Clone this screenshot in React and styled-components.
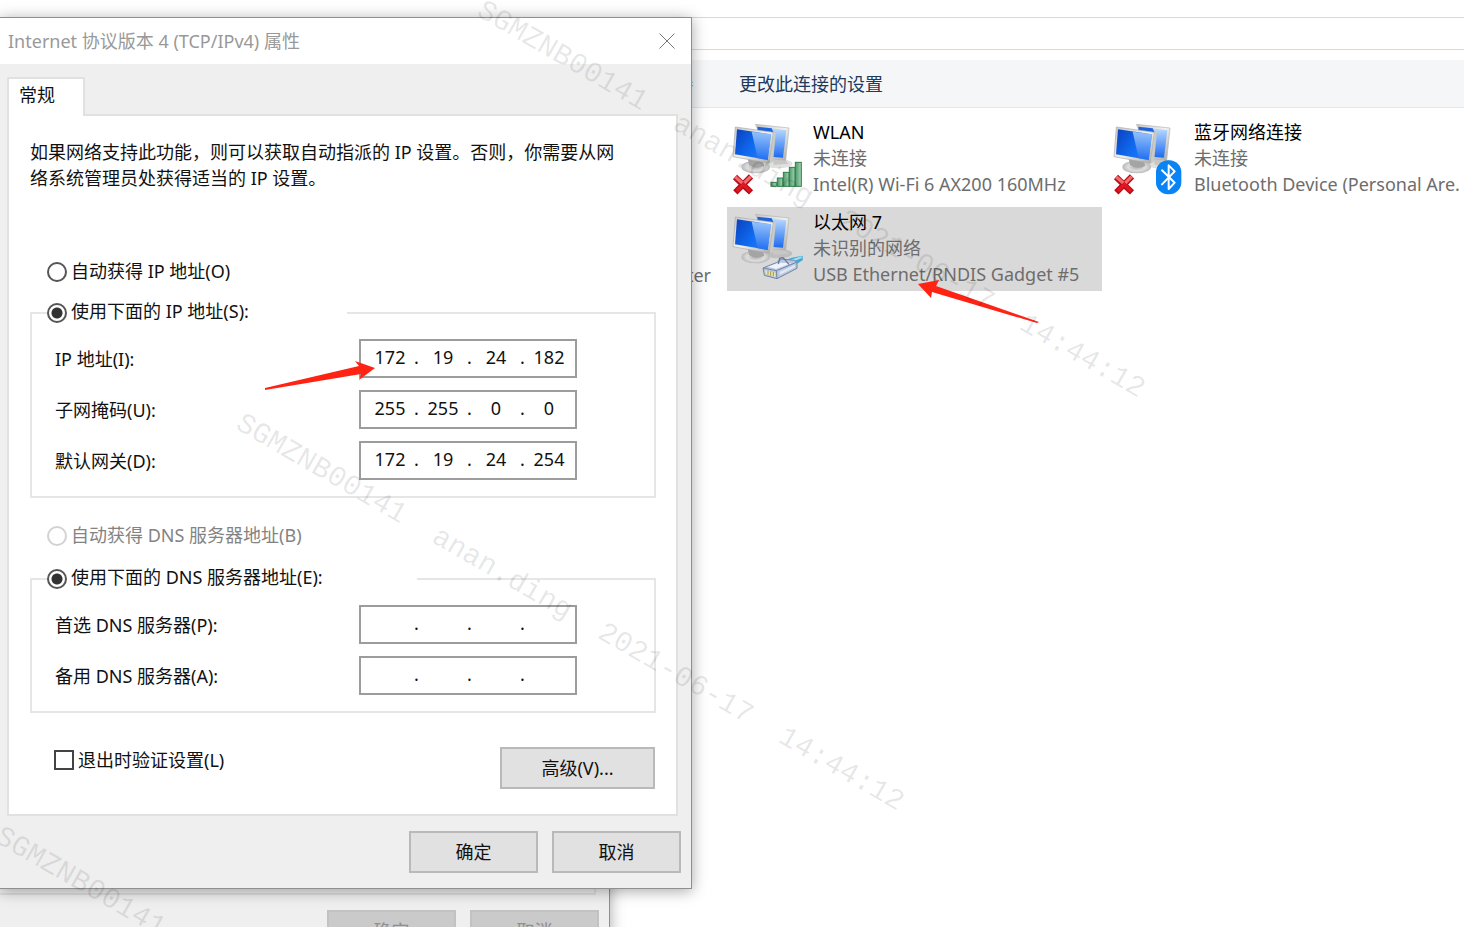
import React, { useState } from "react";
import styled, { createGlobalStyle } from "styled-components";

const connections = [
  { name: "WLAN", status: "未连接", device: "Intel(R) Wi-Fi 6 AX200 160MHz", off: true, badge: "signal" },
  { name: "以太网 7", status: "未识别的网络", device: "USB Ethernet/RNDIS Gadget #5", badge: "cable", selected: true },
  { name: "蓝牙网络连接", status: "未连接", device: "Bluetooth Device (Personal Are.", off: true, badge: "bluetooth" },
];

const watermarks = [
  { left: 479, top: -7 },
  { left: 238, top: 406 },
  { left: -3, top: 819 },
];

const ipRows = [
  { id: "ip", label: "IP 地址(I):", value: ["172", "19", "24", "182"] },
  { id: "mask", label: "子网掩码(U):", value: ["255", "255", "0", "0"] },
  { id: "gateway", label: "默认网关(D):", value: ["172", "19", "24", "254"] },
];

const dnsRows = [
  { id: "dns1", label: "首选 DNS 服务器(P):", value: ["", "", "", ""] },
  { id: "dns2", label: "备用 DNS 服务器(A):", value: ["", "", "", ""] },
];

function Badge({ type }) {
  if (type === "signal") {
    return (
      <g fill="url(#bar)" stroke="#2f7d4c" strokeWidth="3">
        <rect x="138" y="202" width="16" height="12" />
        <rect x="157" y="189" width="16" height="25" />
        <rect x="175" y="172" width="17" height="42" />
        <rect x="193" y="157" width="17" height="57" />
        <rect x="211" y="142" width="18" height="72" />
      </g>
    );
  }
  if (type === "bluetooth") {
    return (
      <g>
        <rect x="150" y="136" width="76" height="102" rx="36" fill="#0a84f5" />
        <path
          d="M168 166 L206 203 L188 222 V151 L206 169 L168 208"
          fill="none"
          stroke="#fff"
          strokeWidth="6"
          strokeLinejoin="round"
          strokeLinecap="round"
        />
      </g>
    );
  }
  return (
    <g strokeLinejoin="round">
      <path d="M180 166 L200 158 L233 152 V166 L206 182Z" fill="#3fabd4" />
      <path d="M192 166 L230 154 V159 L198 172Z" fill="#a9e2f4" />
      <path d="M114 189 L154 173 L170 162 L208 166 L216 172 V190 L156 221 L118 211Z" fill="#b9c7df" stroke="#7385a6" strokeWidth="3" />
      <path d="M114 189 L154 197 L214 172 M154 197 L156 221" fill="none" stroke="#7385a6" strokeWidth="3" />
      <path d="M128 185 L160 173 L200 174 L154 192Z" fill="#edf2fb" />
      <path d="M160 177 L164 160 L174 158 L192 178" fill="none" stroke="#65789c" strokeWidth="4" />
      <path d="M121 196 L151 203 V215 L122 207Z" fill="#efe6a0" />
      <path d="M129 197 V209 M137 199 V212 M145 201 V213" stroke="#9e9650" strokeWidth="3" />
      <path d="M164 200 L210 179 V187 L164 210Z" fill="#dfe7f5" />
    </g>
  );
}

function ConnectionIcon({ off, badge }) {
  return (
    <Icon viewBox="6 6 240 252" aria-hidden="true">
      <defs>
        <linearGradient id="screen" x1="0" y1="0.2" x2="1" y2="0.8">
          <stop offset="0" stopColor="#0b46c4" />
          <stop offset="0.5" stopColor="#0f6af0" />
          <stop offset="1" stopColor="#2a7df5" />
        </linearGradient>
        <linearGradient id="glare" x1="0" y1="0" x2="0" y2="1">
          <stop offset="0" stopColor="#c5e1ff" />
          <stop offset="1" stopColor="#1d6bf0" />
        </linearGradient>
        <linearGradient id="frame" x1="0" y1="0" x2="1" y2="1">
          <stop offset="0" stopColor="#c6c6c4" />
          <stop offset="0.5" stopColor="#f1f1ef" />
          <stop offset="1" stopColor="#a5a5a3" />
        </linearGradient>
        <radialGradient id="stand">
          <stop offset="0" stopColor="#aeaeae" />
          <stop offset="0.6" stopColor="#dedede" />
          <stop offset="1" stopColor="#b9b9b9" />
        </radialGradient>
        <linearGradient id="bar" x1="0" y1="0" x2="1" y2="0">
          <stop offset="0" stopColor="#4d9968" />
          <stop offset="1" stopColor="#a5d6b5" />
        </linearGradient>
      </defs>
      <ellipse cx="160" cy="146" rx="42" ry="14" fill="#000" opacity="0.12" />
      <path d="M142 118 L170 122 L190 146 L146 150Z" fill="#c7c7c5" />
      <path d="M91 28 L192 39 L182 136 L141 132Z" fill="url(#frame)" stroke="#b5b5b3" strokeWidth="2" />
      <path d="M97 35 L184 46 L174 128 L142 126Z" fill="url(#glare)" />
      <path d="M97 35 L140 40 L146 53 L98 48Z" fill="#1e62db" />
      <ellipse cx="92" cy="156" rx="43" ry="19" fill="url(#stand)" />
      <path d="M68 130 L112 136 L118 152 Q94 166 72 150Z" fill="#a4a4a4" />
      <path d="M31 36 L145 52 L134 145 L24 125Z" fill="url(#frame)" stroke="#aaaaa8" strokeWidth="2" />
      <path d="M145 52 L153 50 L144 141 L134 145Z" fill="#c9c9c6" />
      <path d="M36 43 L138 58 L128 135 L30 118Z" fill="url(#screen)" />
      <path d="M80 50 L138 58 L128 135 L98 130Z" fill="url(#glare)" opacity="0.75" />
      {off && (
        <g>
          <path d="M30 186 L78 232 M78 184 L31 232" stroke="#b90b16" strokeWidth="18" />
          <path d="M31 186 L55 207 L77 185" fill="none" stroke="#ee6a6f" strokeWidth="10" />
          <path d="M35 229 L55 208 L75 229" fill="none" stroke="#df1722" strokeWidth="11" />
        </g>
      )}
      <Badge type={badge} />
    </Icon>
  );
}

function AddressRow({ row }) {
  return (
    <Row role="group" aria-labelledby={row.id + "-label"}>
      <label id={row.id + "-label"} htmlFor={row.id + "-0"}>
        {row.label}
      </label>
      <AddressBox>
        {row.value.map((part, i) => (
          <React.Fragment key={i}>
            {i > 0 && <span>.</span>}
            <Octet id={row.id + "-" + i} defaultValue={part} maxLength={3} aria-label={row.label + " " + (i + 1)} />
          </React.Fragment>
        ))}
      </AddressBox>
    </Row>
  );
}

function App() {
  const [mode, setMode] = useState("manual");

  return (
    <Desktop>
      <GlobalStyle />
      <Explorer>
        <AddressBar />
        <CommandBar>
          <Command $accent>接</Command>
          <Command>更改此连接的设置</Command>
        </CommandBar>
        <ConnectionList>
          <Covered>ter</Covered>
          {connections.map((item) => (
            <Connection key={item.name} $selected={item.selected}>
              <ConnectionIcon off={item.off} badge={item.badge} />
              <Details>
                <strong>{item.name}</strong>
                <span>{item.status}</span>
                <span>{item.device}</span>
              </Details>
            </Connection>
          ))}
        </ConnectionList>
      </Explorer>

      <BackDialog>
        <BackPanel />
        <Actions>
          <PushButton disabled>确定</PushButton>
          <PushButton disabled>取消</PushButton>
        </Actions>
      </BackDialog>

      <Dialog role="dialog" aria-labelledby="dialog-title">
        <TitleBar>
          <h1 id="dialog-title">Internet 协议版本 4 (TCP/IPv4) 属性</h1>
          <CloseButton aria-label="关闭">
            <svg width="16" height="16" viewBox="0 0 16 16">
              <path d="M0.5 0.5 L15.5 15.5 M15.5 0.5 L0.5 15.5" stroke="#777" fill="none" />
            </svg>
          </CloseButton>
        </TitleBar>
        <DialogBody>
          <Tab>常规</Tab>
          <Panel>
            <Intro>
              如果网络支持此功能，则可以获取自动指派的 IP 设置。否则，你需要从网络系统管理员处获得适当的 IP 设置。
            </Intro>

            <Choice $top={68}>
              <Radio name="ip-mode" checked={mode === "auto"} onChange={() => setMode("auto")} />
              <span>自动获得 IP 地址(O)</span>
            </Choice>
            <Group $top={15}>
              <Legend $width={300}>
                <label>
                  <Radio name="ip-mode" checked={mode === "manual"} onChange={() => setMode("manual")} />
                  <span>使用下面的 IP 地址(S):</span>
                </label>
              </Legend>
              {ipRows.map((row) => (
                <AddressRow key={row.id} row={row} />
              ))}
            </Group>

            <Choice $top={25} $disabled>
              <Radio name="dns-mode" disabled />
              <span>自动获得 DNS 服务器地址(B)</span>
            </Choice>
            <Group $top={17}>
              <Legend $width={370}>
                <label>
                  <Radio name="dns-mode" defaultChecked />
                  <span>使用下面的 DNS 服务器地址(E):</span>
                </label>
              </Legend>
              {dnsRows.map((row) => (
                <AddressRow key={row.id} row={row} />
              ))}
            </Group>

            <PanelFooter>
              <label>
                <Checkbox />
                退出时验证设置(L)
              </label>
              <PushButton $wide>高级(V)...</PushButton>
            </PanelFooter>
          </Panel>
          <Actions>
            <PushButton>确定</PushButton>
            <PushButton>取消</PushButton>
          </Actions>
        </DialogBody>
      </Dialog>

      <Arrows width="1100" height="420" viewBox="0 0 1100 420" aria-hidden="true">
        <path d="M265 388 L359 366 L355 361 L375 368 L359 380 L361 374 L265 390Z" />
        <path d="M918 284 L939 280 L936 286 L1039 322 L1037 323 L932 292 L931 298Z" />
      </Arrows>

      {watermarks.map((mark) => (
        <Watermark key={mark.top} $left={mark.left} $top={mark.top}>
          {"SGMZNB00141  anan.ding  2021-06-17  14:44:12"}
        </Watermark>
      ))}
    </Desktop>
  );
}

const GlobalStyle = createGlobalStyle`
  * {
    box-sizing: border-box;
  }
  body {
    margin: 0;
    background: #fff;
    font-family: "Noto Sans", "Noto Sans CJK SC", sans-serif;
    font-size: 18px;
    line-height: 26px;
    color: #111;
  }
  button, input {
    font: inherit;
    color: inherit;
  }
`;

const Desktop = styled.div`
  position: relative;
  height: 100vh;
  overflow: hidden;
`;

const Explorer = styled.main`
  padding-top: 17px;
`;

const AddressBar = styled.div`
  height: 33px;
  border-top: 1px solid #d9d9d9;
  border-bottom: 1px solid #d9d9d9;
`;

const CommandBar = styled.div`
  display: flex;
  align-items: center;
  gap: 46px;
  height: 48px;
  margin-top: 10px;
  padding-left: 675px;
  background: #f5f6f8;
  border-bottom: 1px solid #e5e7ea;
`;

const Command = styled.button`
  padding: 0;
  border: none;
  background: none;
  color: ${(p) => (p.$accent ? "#0a64a4" : "#1e395b")};
`;

const ConnectionList = styled.ul`
  display: grid;
  grid-template-rows: 84px 84px;
  grid-auto-flow: column;
  grid-auto-columns: 375px;
  gap: 6px;
  margin: 0;
  padding: 9px 0 0 346px;
  list-style: none;
`;

const Connection = styled.li`
  display: flex;
  gap: 6px;
  background: ${(p) => (p.$selected ? "#d9d9d9" : "transparent")};
`;

const Covered = styled.li`
  grid-row: 2;
  align-self: end;
  padding: 0 10px 3px 0;
  text-align: right;
  color: #6d6d6d;
`;

const Icon = styled.svg`
  flex: none;
  width: 80px;
  height: 84px;
`;

const Details = styled.div`
  display: flex;
  flex-direction: column;
  padding-top: 2px;
  white-space: nowrap;
  color: #6d6d6d;

  strong {
    font-weight: 400;
    color: #000;
  }
`;

const Window = styled.section`
  position: absolute;
  left: 0;
  background: #efefef;
  border: 1px solid #8f8f8f;
  border-left: none;
  box-shadow: 0 2px 14px rgba(0, 0, 0, 0.35);
`;

const Dialog = styled(Window)`
  top: 17px;
  width: 692px;
`;

const BackDialog = styled(Window)`
  top: 841px;
  width: 610px;
  padding-right: 10px;
  padding-bottom: 15px;
`;

const BackPanel = styled.div`
  height: 53px;
  margin-right: 3px;
  border: 2px solid #dedede;
  border-left: none;
`;

const TitleBar = styled.header`
  display: flex;
  align-items: center;
  justify-content: space-between;
  height: 46px;
  padding: 0 16px 0 8px;
  background: #fff;

  h1 {
    margin: 0;
    font-size: 18px;
    font-weight: 400;
    color: #999;
  }
`;

const CloseButton = styled.button`
  display: flex;
  padding: 0;
  border: none;
  background: none;
`;

const DialogBody = styled.div`
  padding: 13px 10px 15px 7px;
`;

const Tab = styled.button`
  position: relative;
  display: block;
  width: 78px;
  height: 39px;
  margin-bottom: -2px;
  padding: 0 0 6px 10px;
  text-align: left;
  background: #fff;
  border: 2px solid #e1e1e1;
  border-bottom: none;
`;

const Panel = styled.div`
  margin-right: 3px;
  padding: 23px 20px 25px 21px;
  background: #fff;
  border: 2px solid #e1e1e1;
`;

const Intro = styled.p`
  max-width: 600px;
  margin: 0;
`;

const Choice = styled.label`
  display: flex;
  align-items: center;
  gap: 4px;
  margin-top: ${(p) => p.$top}px;
  padding-left: 17px;
  color: ${(p) => (p.$disabled ? "#838383" : "inherit")};

  span {
    padding-bottom: 2px;
    line-height: 24px;
  }
`;

const Radio = styled.input.attrs({ type: "radio" })`
  appearance: none;
  flex: none;
  width: 20px;
  height: 20px;
  margin: 0;
  border: 2px solid #555;
  border-radius: 50%;
  background: #fff;

  &:checked {
    background: radial-gradient(circle, #333 5px, #fff 6px);
  }
  &:disabled {
    border-color: #d2d2d2;
  }
`;

const Checkbox = styled.input.attrs({ type: "checkbox" })`
  appearance: none;
  flex: none;
  width: 20px;
  height: 20px;
  margin: 0;
  border: 2px solid #444;
  background: #fff;

  &:checked {
    background: #333;
  }
`;

const Group = styled.fieldset`
  display: flex;
  flex-direction: column;
  gap: 12px;
  margin: ${(p) => p.$top}px 0 0;
  padding: 13px 15px 16px;
  border: 2px solid #e6e6e6;
`;

const Legend = styled.legend`
  width: ${(p) => p.$width}px;
  padding: 0;

  label {
    display: flex;
    align-items: center;
    gap: 4px;
  }

  span {
    padding-bottom: 4px;
    line-height: 22px;
  }
`;

const Row = styled.div`
  display: grid;
  grid-template-columns: 304px 218px;
  align-items: center;
  padding-left: 8px;
`;

const AddressBox = styled.div`
  display: flex;
  align-items: center;
  height: 39px;
  padding: 0 0 3px 8px;
  border: 2px solid #9c9c9c;
  background: #fff;

  span {
    width: 11px;
    text-align: center;
  }
`;

const Octet = styled.input`
  width: 42px;
  height: 26px;
  padding: 0;
  border: none;
  outline: none;
  background: none;
  text-align: center;
`;

const PanelFooter = styled.div`
  display: flex;
  align-items: flex-start;
  justify-content: space-between;
  margin-top: 34px;
  padding: 0 1px 0 24px;

  label {
    display: flex;
    align-items: center;
    gap: 4px;
  }
`;

const Actions = styled.div`
  display: flex;
  justify-content: flex-end;
  gap: 14px;
  margin-top: 15px;
`;

const PushButton = styled.button`
  width: ${(p) => (p.$wide ? 155 : 129)}px;
  height: 42px;
  padding: 0;
  border: 2px solid #b9b9b9;
  background: #e1e1e1;

  &:disabled {
    border-color: #c2c2c2;
    background: #cacaca;
    color: #8f8f8f;
  }
`;

const Arrows = styled.svg`
  position: absolute;
  top: 0;
  left: 0;
  fill: #ff2314;
  pointer-events: none;
`;

const Watermark = styled.div`
  position: absolute;
  left: ${(p) => p.$left}px;
  top: ${(p) => p.$top}px;
  transform: rotate(30deg);
  transform-origin: left center;
  font-family: "Liberation Mono", monospace;
  font-size: 29px;
  line-height: 32px;
  white-space: pre;
  color: rgba(0, 0, 0, 0.1);
  pointer-events: none;
`;

export default App;
